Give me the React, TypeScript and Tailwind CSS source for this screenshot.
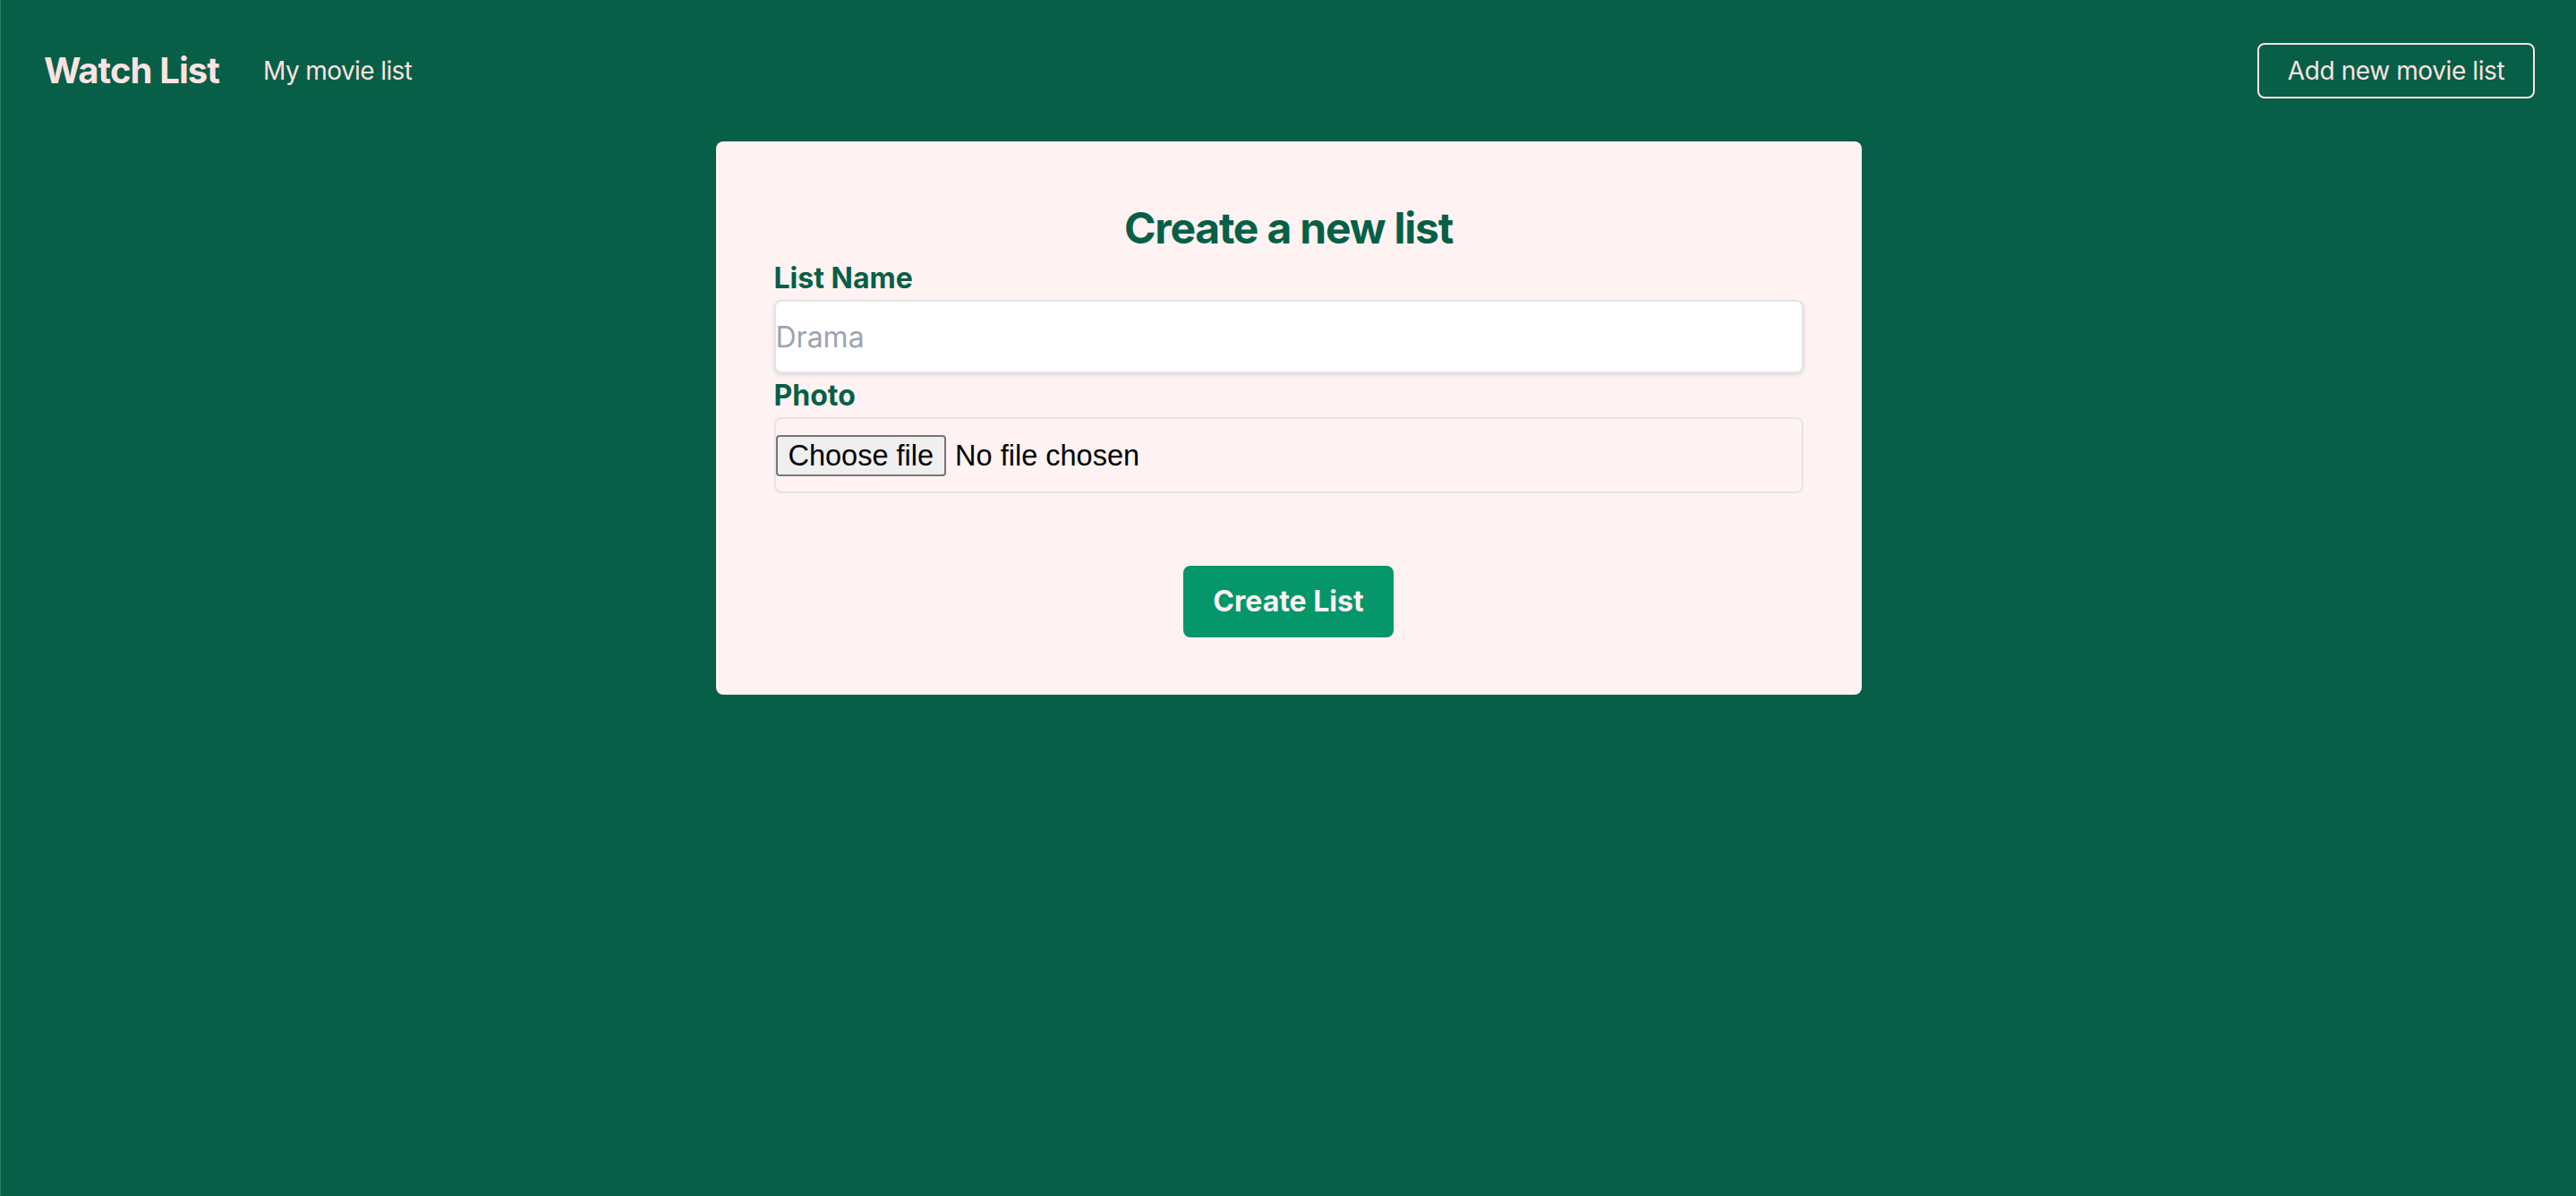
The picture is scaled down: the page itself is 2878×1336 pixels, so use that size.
import React from "react";

export default function App() {
  return (
    <div
      className="min-h-screen w-full bg-[#065f46] border-l border-[#2f7a64]"
      style={{ fontFamily: "Inter, 'Noto Sans', sans-serif" }}
    >
      <nav className="flex h-[158px] items-center justify-between pl-[48px] pr-[46px]">
        <div className="flex items-center gap-[49px]">
          <a href="#" className="text-[40px] font-bold leading-[56px] tracking-[-0.9px] text-[#fee2e2]">
            Watch List
          </a>
          <a href="#" className="text-[28px] leading-[40px] tracking-[-0.6px] text-[#fee2e2]">
            My movie list
          </a>
        </div>
        <button className="h-[62px] w-[310px] rounded-[8px] border-2 border-[#fee2e2] text-[28px] leading-[40px] tracking-[-0.4px] text-[#fee2e2]">
          Add new movie list
        </button>
      </nav>

      <div className="flex justify-center">
        <form className="w-[1280px] rounded-[8px] bg-[#fef2f2] px-[65px] pt-[65px] pb-[64px]">
          <h1 className="text-center text-[48px] font-bold leading-[64px] tracking-[-1.2px] text-[#065f46]">
            Create a new list
          </h1>
          <label className="block text-[32px] font-bold leading-[48px] text-[#065f46]">
            List Name
          </label>
          <input
            type="text"
            placeholder="Drama"
            className="block h-[82px] w-full rounded-[8px] border-2 border-[#e3e4ea] bg-white px-0 text-[32px] text-gray-900 shadow-[0_2px_4px_rgba(0,0,0,0.12)] outline-none placeholder:text-[#9ca3af]"
          />
          <label className="mt-[1px] block text-[32px] font-bold leading-[48px] text-[#065f46]">
            Photo
          </label>
          <label
            className="flex h-[85px] w-full cursor-pointer items-center rounded-[8px] border-2 border-[#e3e4ea] text-[32.5px] text-black"
            style={{ fontFamily: "'Liberation Sans', Arial, sans-serif" }}
          >
            <input type="file" className="hidden" />
            <span className="flex h-[46px] items-center rounded-[4px] border-2 border-[#767676] bg-[#efefef] px-[12px] leading-[38px]">
              Choose file
            </span>
            <span className="ml-[10px] leading-[38px]">No file chosen</span>
          </label>
          <div className="mt-[81px] flex justify-center">
            <button
              type="button"
              className="h-[80px] rounded-[8px] bg-[#059669] px-[33px] text-[32px] font-bold leading-[48px] text-[#fef2f2]"
            >
              Create List
            </button>
          </div>
        </form>
      </div>
    </div>
  );
}
